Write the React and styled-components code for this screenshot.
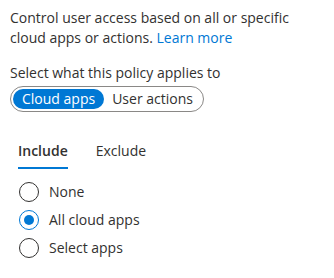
import React, { useState } from 'react';
import styled, { createGlobalStyle } from 'styled-components';

const GlobalStyle = createGlobalStyle`
  body {
    margin: 0;
    background: #ffffff;
    font-family: "Open Sans", "Noto Sans", sans-serif;
    color: #323130;
  }
`;

const Panel = styled.div`
  padding: 8px 10px 0 10px;
  font-size: 14px;
  line-height: 20px;
`;

const Intro = styled.p`
  margin: 0;
`;

const Link = styled.a`
  color: #0078d4;
  text-decoration: none;
`;

const Label = styled.div`
  margin-top: 15px;
`;

const Toggle = styled.div`
  display: inline-flex;
  align-items: center;
  margin-top: 3px;
  padding: 2px;
  border: 1px solid #8a8886;
  border-radius: 13px;
`;

const ToggleOption = styled.button`
  border: none;
  font: inherit;
  height: 20px;
  line-height: 20px;
  padding: 0 ${p => (p.$active ? 9 : 8)}px;
  border-radius: 10px;
  cursor: pointer;
  background: ${p => (p.$active ? '#0078d4' : 'transparent')};
  color: ${p => (p.$active ? '#ffffff' : '#323130')};
`;

const Tabs = styled.div`
  display: flex;
  gap: 28px;
  margin-top: 22px;
  padding-left: 8px;
`;

const Tab = styled.div`
  position: relative;
  height: 36px;
  line-height: 34px;
  font-weight: ${p => (p.$active ? 600 : 400)};
  cursor: pointer;
  &::after {
    content: '';
    position: absolute;
    left: 0;
    right: 0;
    bottom: 1px;
    height: 2px;
    background: ${p => (p.$active ? '#0078d4' : 'transparent')};
  }
`;

const RadioList = styled.div`
  display: flex;
  flex-direction: column;
  gap: 8px;
  margin-top: 12px;
  padding-left: 9px;
`;

const RadioRow = styled.label`
  display: flex;
  align-items: center;
  gap: 10px;
  height: 20px;
  cursor: pointer;
`;

const Circle = styled.span`
  box-sizing: border-box;
  width: 20px;
  height: 20px;
  border-radius: 50%;
  border: 1px solid ${p => (p.$checked ? '#0078d4' : '#323130')};
  display: flex;
  align-items: center;
  justify-content: center;
  &::after {
    content: '';
    width: 10px;
    height: 10px;
    border-radius: 50%;
    background: ${p => (p.$checked ? '#0078d4' : 'transparent')};
  }
`;

const options = ['None', 'All cloud apps', 'Select apps'];

export default function App() {
  const [mode, setMode] = useState('cloud');
  const [tab, setTab] = useState('include');
  const [choice, setChoice] = useState('All cloud apps');

  return (
    <>
      <GlobalStyle />
      <Panel>
        <Intro>
          Control user access based on all or specific cloud apps or actions.{' '}
          <Link href="#">Learn more</Link>
        </Intro>
        <Label>Select what this policy applies to</Label>
        <Toggle>
          <ToggleOption $active={mode === 'cloud'} onClick={() => setMode('cloud')}>
            Cloud apps
          </ToggleOption>
          <ToggleOption $active={mode === 'user'} onClick={() => setMode('user')}>
            User actions
          </ToggleOption>
        </Toggle>
        <Tabs>
          <Tab $active={tab === 'include'} onClick={() => setTab('include')}>Include</Tab>
          <Tab $active={tab === 'exclude'} onClick={() => setTab('exclude')}>Exclude</Tab>
        </Tabs>
        <RadioList>
          {options.map(o => (
            <RadioRow key={o} onClick={() => setChoice(o)}>
              <Circle $checked={choice === o} />
              {o}
            </RadioRow>
          ))}
        </RadioList>
      </Panel>
    </>
  );
}
